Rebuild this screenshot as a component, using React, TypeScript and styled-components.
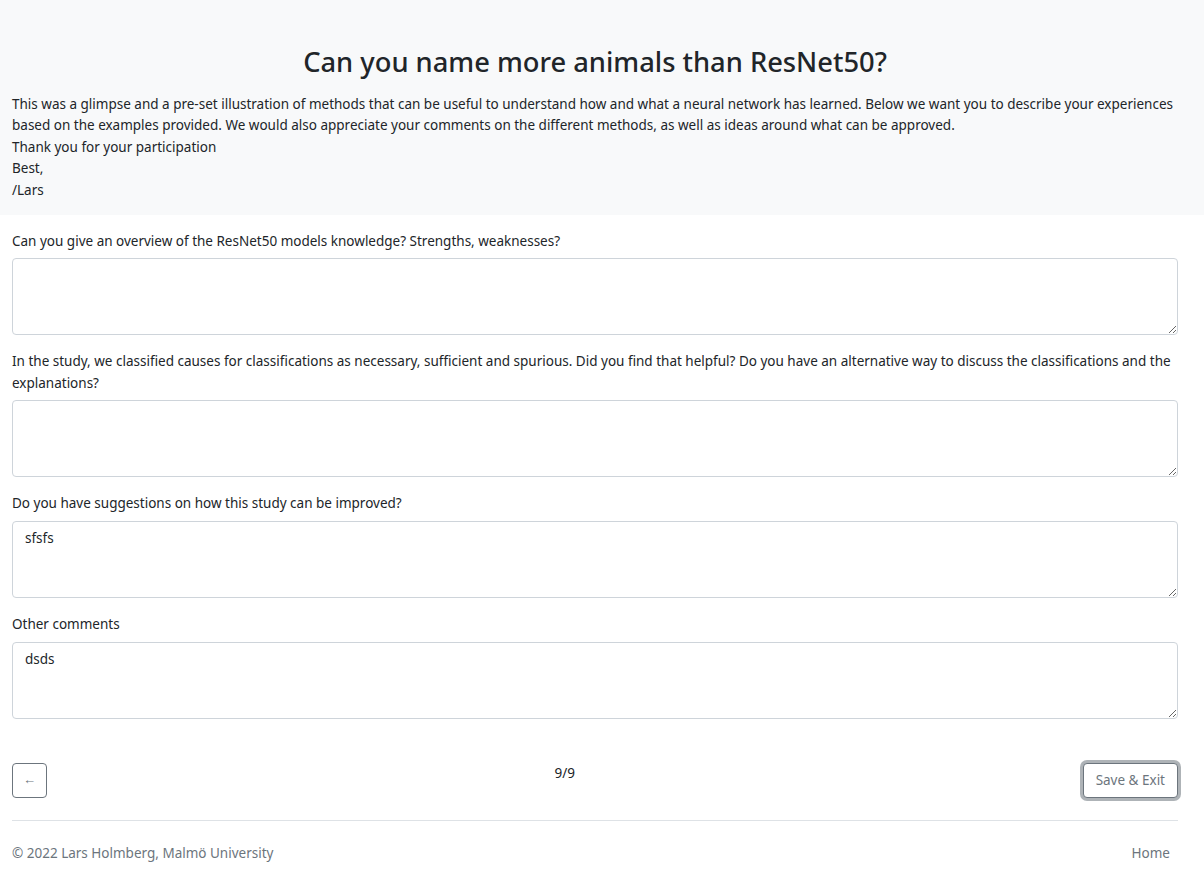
import React from "react";
import styled, { createGlobalStyle } from "styled-components";

const Global = createGlobalStyle`
  * { box-sizing: border-box; }
  body {
    margin: 0;
    font-family: "Noto Sans", "Open Sans", sans-serif;
    font-size: 13.5px;
    line-height: 21.6px;
    color: #212529;
    background: #fff;
  }
`;

const Page = styled.div`
  display: flex;
  flex-direction: column;
`;

const Hero = styled.header`
  background: #f8f9fa;
  padding: 45px 26px 0 12px;
`;

const Title = styled.h1`
  margin: 0 0 14px;
  text-align: center;
  font-size: 27.3px;
  font-weight: 500;
  line-height: 34.6px;
  color: #212529;
`;

const Intro = styled.p`
  margin: 0 0 13px;
`;

const Main = styled.main`
  padding: 16px 26px 0 12px;
  display: flex;
  flex-direction: column;
  gap: 16px;
`;

const Field = styled.div`
  display: flex;
  flex-direction: column;
`;

const Label = styled.label`
  margin-bottom: 6px;
`;

const TextArea = styled.textarea`
  display: block;
  width: 100%;
  height: 77px;
  padding: 6px 12px;
  font: inherit;
  color: #212529;
  border: 1px solid #ced4da;
  border-radius: 4px;
  background: #fff;
  resize: vertical;
  outline: none;
`;

const NavRow = styled.div`
  display: flex;
  align-items: flex-start;
  gap: 24px;
  margin-top: 28px;
`;

const Counter = styled.div`
  flex: 1;
  text-align: center;
`;

const OutlineButton = styled.button<{ $focused?: boolean }>`
  font: inherit;
  line-height: 21.6px;
  padding: 6px 12px;
  color: #6c757d;
  background: #fff;
  border: 1px solid #6c757d;
  border-radius: 4px;
  cursor: pointer;
  box-shadow: ${(p) => (p.$focused ? "0 0 0 3px rgba(130, 138, 145, 0.65)" : "none")};
`;

const BackButton = styled(OutlineButton)`
  width: 35px;
  height: 35px;
  padding: 0;
  display: flex;
  align-items: center;
  justify-content: center;
  font-size: 13px;
`;

const Footer = styled.footer`
  margin: 22px 26px 0 12px;
  border-top: 1px solid #dee2e6;
  padding: 22px 0 16px;
  display: flex;
  justify-content: space-between;
  align-items: center;
  color: #6c757d;
`;

const HomeLink = styled.a`
  color: #6c757d;
  text-decoration: none;
  padding: 0 8px;
`;

const questions = [
  { q: "Can you give an overview of the ResNet50 models knowledge? Strengths, weaknesses?", a: "" },
  {
    q: "In the study, we classified causes for classifications as necessary, sufficient and spurious. Did you find that helpful? Do you have an alternative way to discuss the classifications and the explanations?",
    a: "",
  },
  { q: "Do you have suggestions on how this study can be improved?", a: "sfsfs" },
  { q: "Other comments", a: "dsds" },
];

export default function App() {
  return (
    <Page>
      <Global />
      <Hero>
        <Title>Can you name more animals than ResNet50?</Title>
        <Intro>
          This was a glimpse and a pre-set illustration of methods that can be useful to understand how and what a
          neural network has learned. Below we want you to describe your experiences based on the examples provided.
          We would also appreciate your comments on the different methods, as well as ideas around what can be
          approved.
          <br />
          Thank you for your participation
          <br />
          Best,
          <br />
          /Lars
        </Intro>
      </Hero>
      <Main>
        {questions.map((item, i) => (
          <Field key={i}>
            <Label htmlFor={`q${i}`}>{item.q}</Label>
            <TextArea id={`q${i}`} defaultValue={item.a} />
          </Field>
        ))}
      </Main>
      <Main>
        <NavRow>
          <BackButton aria-label="Back">←</BackButton>
          <Counter>9/9</Counter>
          <OutlineButton $focused>Save &amp; Exit</OutlineButton>
        </NavRow>
      </Main>
      <Footer>
        <span>© 2022 Lars Holmberg, Malmö University</span>
        <HomeLink href="#">Home</HomeLink>
      </Footer>
    </Page>
  );
}
